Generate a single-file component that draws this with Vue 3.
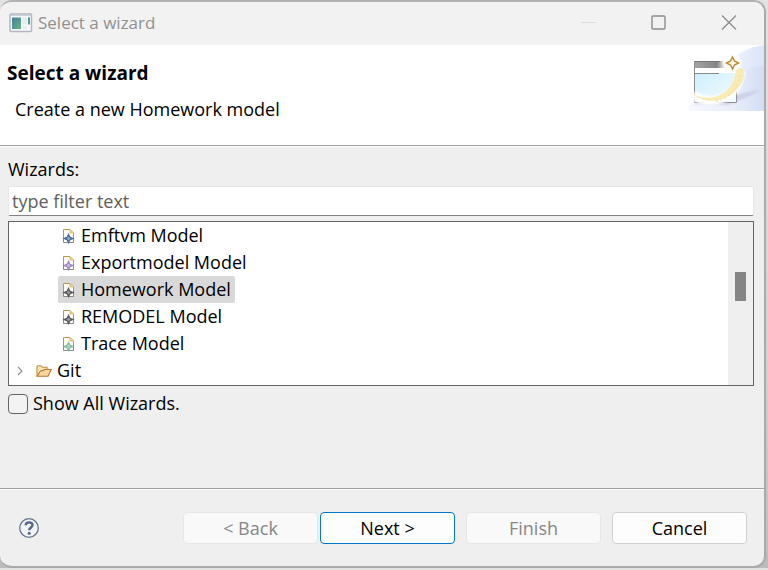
<script setup>
import { ref } from 'vue'

const filter = ref('')
const showAll = ref(false)
const selected = ref('Homework Model')
const models = [
  { name: 'Emftvm Model', tone: 'blue' },
  { name: 'Exportmodel Model', tone: 'violet' },
  { name: 'Homework Model', tone: 'grey' },
  { name: 'REMODEL Model', tone: 'grey' },
  { name: 'Trace Model', tone: 'green' },
]
</script>

<template>
  <div class="window">
    <header class="titlebar">
      <svg class="app-icon" width="24" height="20" viewBox="0 0 24 20" aria-hidden="true">
        <defs>
          <linearGradient id="pane" x1="0" y1="0" x2="1" y2="1">
            <stop offset="0" stop-color="#467fa8" />
            <stop offset="1" stop-color="#65b57c" />
          </linearGradient>
        </defs>
        <rect x="1" y="1" width="21.500" height="17.500" rx="1" fill="#f7f8f9" stroke="#b1b8c0" stroke-width="1.500" />
        <path d="M2 2.500h20" stroke="#c9d1d9" />
        <rect x="3" y="4.500" width="9" height="11.500" fill="url(#pane)" />
        <rect x="13.500" y="4.500" width="4.500" height="7" fill="#e9ebed" />
        <rect x="13.500" y="13" width="4.500" height="3" fill="#e9ebed" />
        <rect x="19" y="4.500" width="2" height="7" fill="url(#pane)" />
      </svg>
      <span class="title">Select a wizard</span>
      <div class="controls">
        <button type="button" disabled aria-label="Minimize">
          <svg width="16" height="16" viewBox="0 0 16 16"><path d="M0 7.500h15" stroke="#dcdcdc" /></svg>
        </button>
        <button type="button" aria-label="Maximize">
          <svg width="16" height="16" viewBox="0 0 16 16"><rect x="1" y="1" width="13" height="13" rx="1" fill="none" stroke="#8c8c8c" stroke-width="1.400" /></svg>
        </button>
        <button type="button" aria-label="Close">
          <svg width="16" height="16" viewBox="0 0 16 16"><path d="M1 .5l14 14M15 .5L1 14.500" stroke="#8c8c8c" stroke-width="1.300" /></svg>
        </button>
      </div>
    </header>

    <section class="banner">
      <div class="intro">
        <h1>Select a wizard</h1>
        <p>Create a new Homework model</p>
      </div>
      <svg class="art" width="75" height="66" viewBox="0 0 75 66" aria-hidden="true">
        <defs>
          <linearGradient id="sky" x1="0" x2="1">
            <stop offset="0" stop-color="#f6f8fd" />
            <stop offset="0.600" stop-color="#e9eefa" />
            <stop offset="1" stop-color="#d2ddf4" />
          </linearGradient>
          <linearGradient id="haze" x1="0" x2="1">
            <stop offset="0" stop-color="#eef2fc" />
            <stop offset="1" stop-color="#dbe5f8" />
          </linearGradient>
          <linearGradient id="bar" x1="0" x2="1">
            <stop offset="0" stop-color="#a5a5a5" />
            <stop offset="0.600" stop-color="#858585" />
            <stop offset="0.850" stop-color="#fff" />
          </linearGradient>
          <linearGradient id="glass" x1="0" y1="0" x2="1" y2="1">
            <stop offset="0" stop-color="#cdeefe" />
            <stop offset="1" stop-color="#f5fbff" />
          </linearGradient>
          <filter id="soft" x="-30%" y="-30%" width="160%" height="160%"><feGaussianBlur stdDeviation="1.200" /></filter>
        </defs>
        <path d="M42 16C50 7 61 2 75 0V40H42Z" fill="url(#haze)" />
        <path d="M0 60C20 56 32 48 42 36C51 27 62 21 75 21V66H0Z" fill="url(#sky)" />
        <path d="M1 59L28 54L70 45L63 50L39 60Z" fill="#c5c6df" opacity="0.700" filter="url(#soft)" />
        <rect x="5" y="16" width="43" height="42" fill="#fff" />
        <rect x="6" y="28" width="41" height="29" fill="url(#glass)" />
        <path d="M5 16h38v7H5z" fill="url(#bar)" />
        <path d="M5 16.500h26" stroke="#777" />
        <path d="M6 28.500h24" stroke="#8a8a8a" />
        <path d="M5.500 16V57.500H47.500V44" fill="none" stroke="#8e8e8e" />
        <circle cx="43" cy="18" r="9" fill="#fff" filter="url(#soft)" />
        <path d="M4 50C19 61 48 57 52 26" fill="none" stroke="#fff" stroke-width="9" filter="url(#soft)" />
        <path d="M3 48C17 58 44 53 47 25Q51 21 55 25C58 48 22 67 3 48Z" fill="#faeab5" />
        <path d="M27 56C40 54 49 43 51 28" fill="none" stroke="#f3e2a6" stroke-width="2" stroke-dasharray="1.500 3" />
        <path d="M43.500 12L45.500 16L49.500 18L45.500 20L43.500 24L41.500 20L37.500 18L41.500 16Z" fill="#fff9e5" stroke="#b98f39" stroke-width="1.500" />
      </svg>
    </section>

    <main class="body">
      <label class="caption" for="filter">Wizards:</label>
      <input id="filter" v-model="filter" class="filter" type="text" placeholder="type filter text">

      <div class="list">
        <ul class="tree" role="tree" aria-label="Wizards">
          <li
            v-for="m in models"
            :key="m.name"
            class="row child"
            role="treeitem"
            :aria-selected="selected === m.name"
            @click="selected = m.name"
          >
            <span class="item" :class="{ selected: selected === m.name }">
              <svg class="file" :class="m.tone" width="13" height="16" viewBox="0 0 13 16" aria-hidden="true">
                <path d="M1.500 14.500V1.500h7l3 3v10z" fill="#fffdf6" />
                <path d="M1.500 10V1.500h6.500L11.500 5V9" fill="none" stroke="#b99848" />
                <path d="M7.500 1.500v4h4z" fill="#e4c77d" />
                <path d="M1.500 9v5.500h10V9" fill="none" stroke="#858891" />
                <path class="star" d="M6.500 5L8.300 8.700L12.500 10.500L8.300 12.300L6.500 16L4.700 12.300L.5 10.500L4.700 8.700Z" />
                <path class="core" d="M6.500 8.500l2 2l-2 2l-2-2z" />
              </svg>
              {{ m.name }}
            </span>
          </li>
          <li class="row folder" role="treeitem" aria-expanded="false" @click="selected = 'Git'">
            <svg class="chevron" width="6" height="10" viewBox="0 0 6 10" aria-hidden="true"><path d="M1 1l4 4l-4 4" fill="none" stroke="#929292" stroke-width="1.200" /></svg>
            <svg class="folder-icon" width="16" height="12" viewBox="0 0 16 12" aria-hidden="true">
              <path d="M1 11V2Q1 .8 2 .8h3l1.500 1.500H11v3" fill="#fae5b5" stroke="#c58a43" stroke-width="1.100" />
              <path d="M1 11.300L4.500 6Q7 6 8.500 4.500H15.300L12 11.300Z" fill="#f8d79c" stroke="#b9762f" stroke-width="1.100" />
            </svg>
            Git
          </li>
        </ul>
        <div class="scrollbar" aria-hidden="true"><div class="thumb"></div></div>
      </div>

      <label class="check"><input v-model="showAll" type="checkbox">Show All Wizards.</label>
    </main>

    <footer class="footer">
      <button class="help" type="button" aria-label="Help">
        <svg width="22" height="22" viewBox="0 0 22 22" aria-hidden="true">
          <circle cx="11" cy="11" r="9.300" fill="#f2f3f5" stroke="#66748f" stroke-width="1.300" />
          <path d="M7.700 8.300C7.800 4.400 14.500 4.400 14.500 8C14.500 10.500 11.200 10.500 11.200 13.300" fill="none" stroke="#56648a" stroke-width="2.400" />
          <circle cx="11.200" cy="16.300" r="1.500" fill="#56648a" />
        </svg>
      </button>
      <div class="actions">
        <div class="pair">
          <button class="btn" type="button" disabled>&lt; Back</button>
          <button class="btn primary" type="button">Next &gt;</button>
        </div>
        <button class="btn" type="button" disabled>Finish</button>
        <button class="btn" type="button">Cancel</button>
      </div>
    </footer>
  </div>
</template>

<style>
body {
  background: linear-gradient(#e2e2e2, #d4d4d4 60%, #bcbcbc);
}
</style>

<style scoped>
.window {
  box-sizing: border-box;
  display: flex;
  flex-direction: column;
  min-height: calc(100vh - 2px);
  margin-right: 2px;
  border: 2px solid #aaa;
  border-top-color: #b2b2b2;
  border-left-width: 0;
  border-radius: 12px;
  overflow: hidden;
  background: #efefef;
  color: #000;
  font: 18px/27px "Open Sans", "Noto Sans", sans-serif;
}
button,
input {
  font: inherit;
}
.titlebar {
  display: flex;
  align-items: center;
  height: 43px;
  padding: 0 0 2px 9px;
  box-sizing: border-box;
  background: #f2f2f2;
}
.title {
  flex: 1;
  padding-left: 5px;
  color: #909090;
  font-size: 17px;
}
.controls {
  display: flex;
}
.controls button {
  display: grid;
  place-items: center;
  width: 70px;
  height: 40px;
  padding: 0;
  border: 0;
  background: none;
}
.banner {
  display: flex;
  justify-content: space-between;
  align-items: flex-start;
  height: 100px;
  border-bottom: 1px solid #a0a0a0;
  background: #fff;
}
.intro {
  padding: 15px 0 0 7px;
}
h1 {
  margin: 0;
  font-size: 19px;
  line-height: 27px;
}
p {
  margin: 9px 0 0 8px;
}
.body {
  flex: 1;
  display: flex;
  flex-direction: column;
  padding: 9px 10px 0 8px;
  border-top: 1px solid #fff;
}
.caption {
  align-self: flex-start;
}
.filter {
  box-sizing: border-box;
  width: 100%;
  height: 30px;
  margin: 3px 0 5px;
  padding: 0 3px;
  border: 1px solid #e8e8e8;
  border-bottom-color: #858585;
  border-radius: 2px;
  outline: 0;
  background: #fff;
}
.filter::placeholder {
  color: #606060;
  opacity: 1;
}
.list {
  display: flex;
  border: 1px solid #646464;
  background: #fff;
}
.tree {
  flex: 1;
  margin: 0;
  padding: 0 0 1px;
  list-style: none;
}
.row {
  display: flex;
  align-items: center;
  height: 27px;
}
.child {
  padding-left: 49px;
}
.item {
  display: flex;
  align-items: center;
  gap: 6px;
  padding: 0 4px;
  border-radius: 2px;
}
.selected {
  background: #d9d9d9;
}
.star {
  fill: currentColor;
}
.core {
  fill: #fff;
  opacity: 0.4;
}
.blue { color: #446b94; }
.violet { color: #a287c7; }
.grey { color: #55565a; }
.green { color: #80bfa4; }
.folder {
  padding-left: 8px;
}
.chevron {
  margin-right: 13px;
}
.folder-icon {
  margin-right: 5px;
}
.scrollbar {
  display: flex;
  justify-content: center;
  width: 25px;
  background: #efefef;
}
.thumb {
  width: 11px;
  height: 29px;
  margin-top: 50px;
  background: #858585;
}
.check {
  display: flex;
  align-items: center;
  align-self: flex-start;
  gap: 5px;
  margin-top: 4px;
}
.check input {
  appearance: none;
  box-sizing: border-box;
  width: 20px;
  height: 20px;
  margin: 0;
  border: 1px solid #646464;
  border-radius: 4px;
  background: #f3f3f3;
}
.check input:checked {
  background: #0067c0;
}
.footer {
  display: flex;
  align-items: center;
  justify-content: space-between;
  padding: 23px 17px 22px 18px;
  border-top: 1px solid #a0a0a0;
  box-shadow: inset 0 1px #fff;
}
.help {
  display: flex;
  padding: 0;
  border: 0;
  background: none;
}
.actions {
  display: flex;
  gap: 11px;
}
.pair {
  display: flex;
  gap: 2px;
}
.btn {
  box-sizing: border-box;
  width: 135px;
  height: 32px;
  padding: 0;
  border: 1px solid #d0d0d0;
  border-radius: 4px;
  background: #fdfdfd;
  color: #000;
  line-height: 28px;
}
.btn:disabled {
  border-color: #e6e6e6;
  background: #f9f9f9;
  color: #878787;
}
.primary {
  border-color: #0078d4;
}
</style>
